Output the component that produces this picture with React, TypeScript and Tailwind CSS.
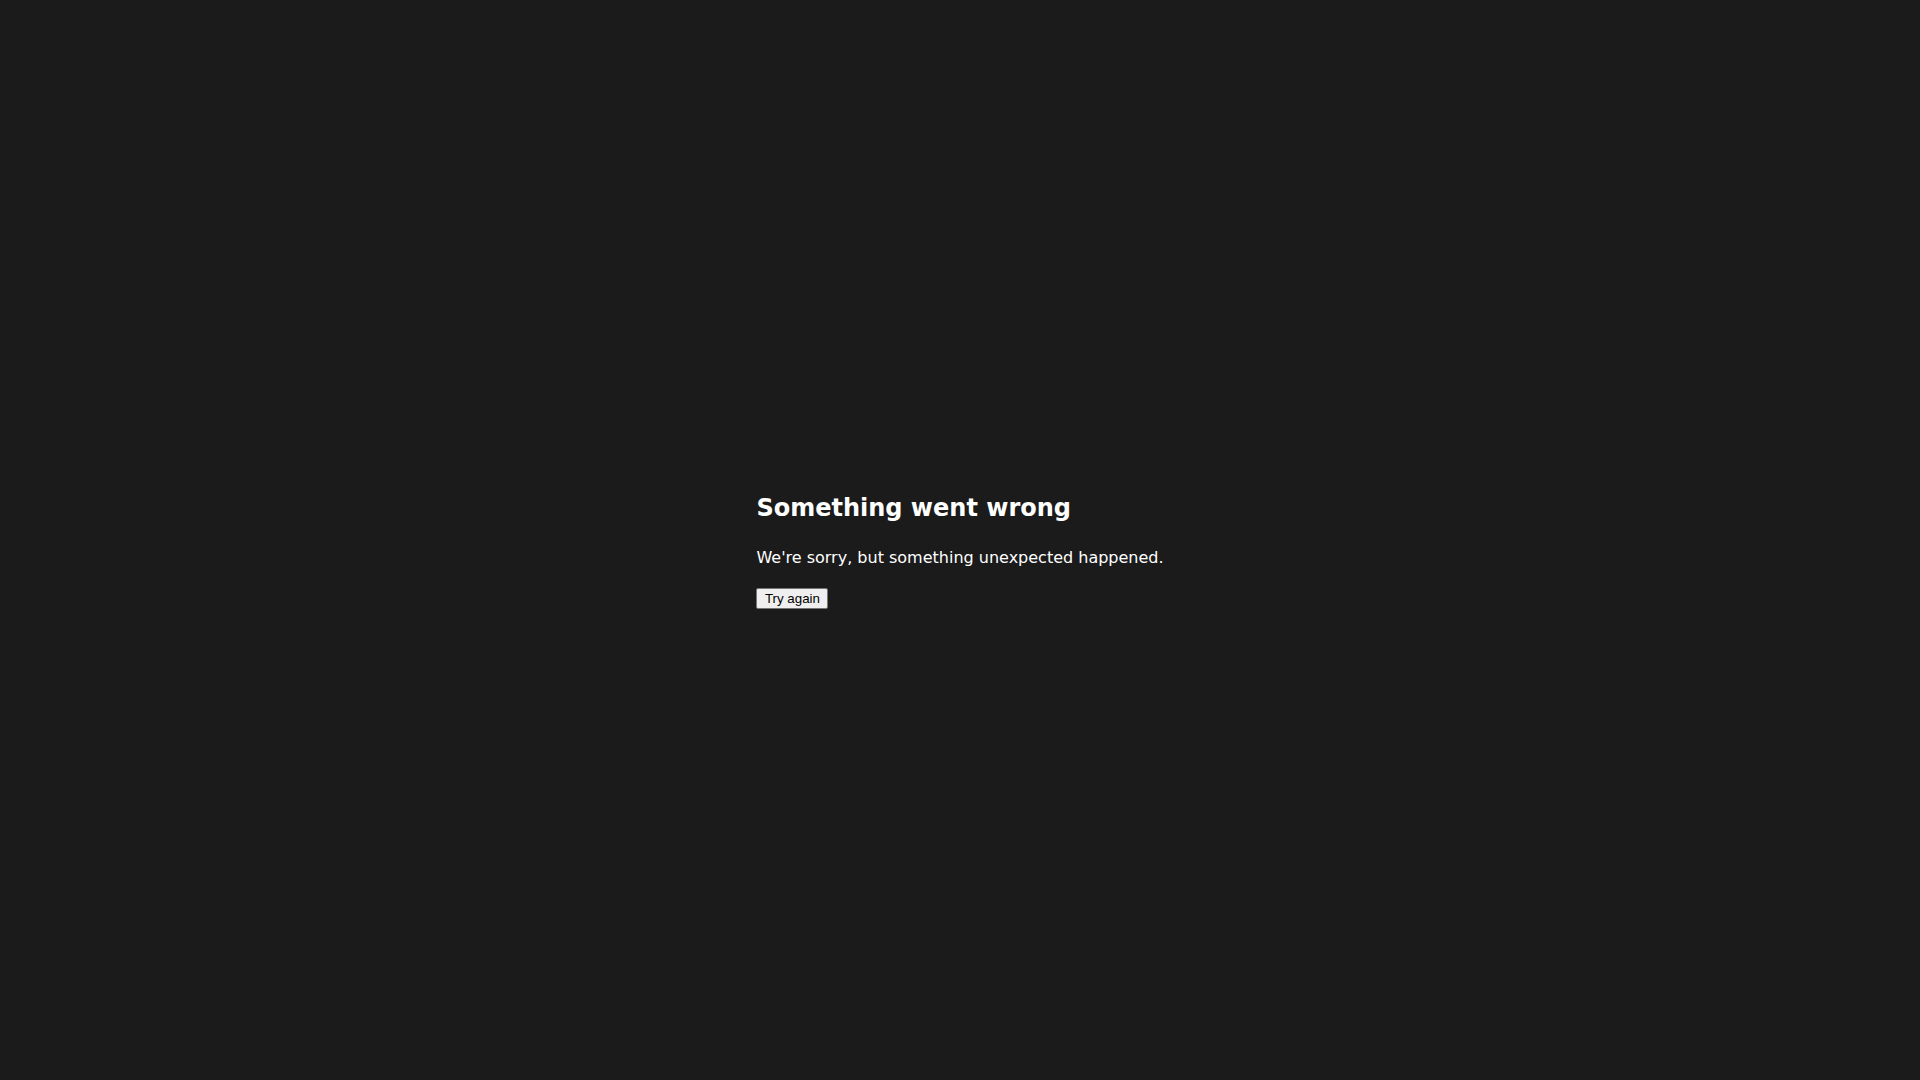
export default function App() {
  return (
    <div
      className="flex min-h-screen w-full items-center justify-center bg-[#1b1b1b] text-white"
      style={{ fontFamily: '"DejaVu Sans", sans-serif' }}
    >
      <div className="flex flex-col items-start">
        <h2 className="mt-[19.5px] mb-[20px] text-[24px] font-bold leading-[36px]">Something went wrong</h2>
        <p className="mb-[18px] text-[16px] leading-[24px]">We're sorry, but something unexpected happened.</p>
        <button
          className="box-border flex h-[21px] items-center rounded-[2px] border border-[#767676] bg-[#efefef] px-[7.5px] text-[13.333px] leading-none text-black"
          style={{ fontFamily: '"Liberation Sans", Arial, sans-serif' }}
        >
          Try again
        </button>
      </div>
    </div>
  );
}
